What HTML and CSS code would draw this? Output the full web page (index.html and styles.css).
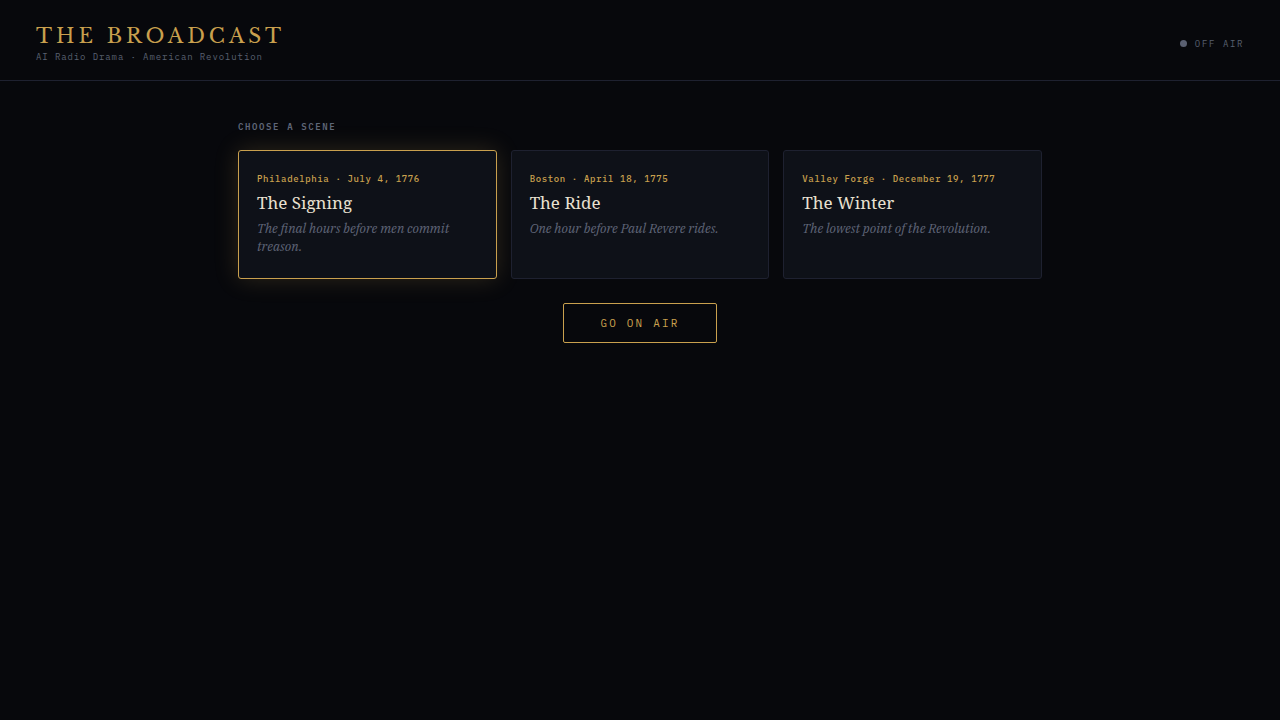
FILE: index.html
```html
<!DOCTYPE html>
<html lang="en">
<head>
  <meta charset="UTF-8">
  <meta name="viewport" content="width=device-width, initial-scale=1.0">
  <title>The Broadcast</title>
  <link rel="stylesheet" href="styles.css">
</head>
<body>
  <header class="header">
    <div class="brand">
      <h1 class="logo">THE BROADCAST</h1>
      <p class="tagline">AI Radio Drama · American Revolution</p>
    </div>
    <div class="status">
      <span class="dot"></span>
      <span>OFF AIR</span>
    </div>
  </header>

  <main class="main">
    <h2 class="section-label">CHOOSE A SCENE</h2>

    <div class="scenes">
      <button type="button" class="scene selected" aria-pressed="true">
        <span class="scene-date">Philadelphia · July 4, 1776</span>
        <span class="scene-title">The Signing</span>
        <span class="scene-desc">The final hours before men commit treason.</span>
      </button>
      <button type="button" class="scene" aria-pressed="false">
        <span class="scene-date">Boston · April 18, 1775</span>
        <span class="scene-title">The Ride</span>
        <span class="scene-desc">One hour before Paul Revere rides.</span>
      </button>
      <button type="button" class="scene" aria-pressed="false">
        <span class="scene-date">Valley Forge · December 19, 1777</span>
        <span class="scene-title">The Winter</span>
        <span class="scene-desc">The lowest point of the Revolution.</span>
      </button>
    </div>

    <button type="button" class="go-btn">GO ON AIR</button>
  </main>

  <script>
    const scenes = document.querySelectorAll('.scene');

    scenes.forEach(scene => {
      scene.addEventListener('click', () => {
        scenes.forEach(item => {
          item.classList.toggle('selected', item === scene);
          item.setAttribute('aria-pressed', item === scene);
        });
      });
    });
  </script>
</body>
</html>
```

FILE: styles.css
```css
* {
  box-sizing: border-box;
  margin: 0;
  padding: 0;
}

body {
  min-height: 100vh;
  background: #07080c;
  color: #e8e0d0;
  font-family: "IBM Plex Serif", "Noto Serif", "Liberation Serif", serif;
}

.tagline,
.status,
.section-label,
.scene-date,
.go-btn {
  font-family: "IBM Plex Mono", "Liberation Mono", monospace;
}

.header {
  display: flex;
  justify-content: space-between;
  align-items: center;
  padding: 23px 36px 17px;
  border-bottom: 1px solid #1e2130;
}

.logo {
  color: #c9a04e;
  font-family: "Libre Baskerville", "Liberation Serif", serif;
  font-size: 20px;
  font-weight: 400;
  line-height: 26px;
  letter-spacing: 0.2em;
}

.tagline {
  margin-top: 2px;
  color: #596070;
  font-size: 9px;
  line-height: 12px;
  letter-spacing: 0.1em;
}

.status {
  display: flex;
  align-items: center;
  gap: 8px;
  color: #596070;
  font-size: 9px;
  letter-spacing: 0.18em;
}

.dot {
  width: 7px;
  height: 7px;
  border-radius: 50%;
  background: #5a6072;
}

.main {
  max-width: 860px;
  margin: 0 auto;
  padding: 40px 28px;
}

.section-label {
  margin-bottom: 17px;
  color: #5f6678;
  font-size: 9px;
  font-weight: 600;
  line-height: 12px;
  letter-spacing: 0.18em;
}

.scenes {
  display: grid;
  grid-template-columns: repeat(3, 1fr);
  gap: 14px;
}

.scene {
  display: flex;
  flex-direction: column;
  padding: 22px 18px;
  border: 1px solid #1e2130;
  border-radius: 3px;
  background: #0e1118;
  font-family: inherit;
  text-align: left;
  cursor: pointer;
}

.scene.selected {
  border-color: #c9a04e;
  box-shadow: 0 0 24px rgba(201, 160, 78, 0.2);
}

.scene-date {
  color: #c9a04e;
  font-size: 9px;
  font-weight: 500;
  line-height: 12px;
  letter-spacing: 0.07em;
}

.scene-title {
  margin-top: 6px;
  color: #e8e0d0;
  font-family: "Noto Serif", "Liberation Serif", serif;
  font-size: 17px;
  line-height: 24px;
}

.scene-desc {
  margin-top: 5px;
  color: #606678;
  font-size: 13px;
  font-style: italic;
  line-height: 18px;
}

.go-btn {
  display: block;
  margin: 24px auto 0;
  padding: 12px 36px;
  border: 1px solid #c9a04e;
  border-radius: 2px;
  background: transparent;
  color: #c9a04e;
  font-size: 11px;
  line-height: 14px;
  letter-spacing: 0.2em;
  cursor: pointer;
}
```
